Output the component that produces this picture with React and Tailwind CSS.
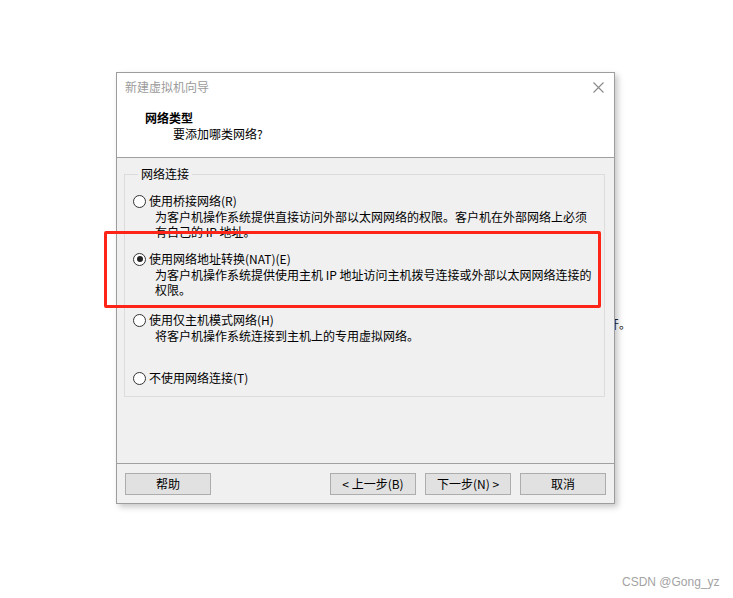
import React from "react";

const cjk = { fontFamily: '"Noto Sans CJK SC", "Microsoft YaHei", sans-serif' };

const Radio = ({ checked }) => (
	<span className="w-[13px] h-[13px] rounded-full border border-[#333] bg-white flex items-center justify-center shrink-0">
		{checked && <span className="w-[6px] h-[6px] rounded-full bg-[#222]"></span>}
	</span>
);

const Option = ({ checked, label, className, children }) => (
	<div className={className}>
		<div className="flex items-center gap-[3px] h-[16px]">
			<Radio checked={checked} />
			<span className="whitespace-nowrap">{label}</span>
		</div>
		{children && (
			<div className="pl-[22px] leading-[15px] whitespace-nowrap">{children}</div>
		)}
	</div>
);

const Btn = ({ children }) => (
	<button className="w-[86px] h-[22px] bg-[#e1e1e1] border border-[#adadad] text-[12px] leading-[20px] text-black flex items-center justify-center">
		{children}
	</button>
);

export default function App() {
	return (
		<div className="relative w-[733px] h-[598px] bg-white overflow-hidden text-[12px] text-black" style={cjk}>
			{/* text of the page behind the dialog */}
			<span className="absolute left-[607px] top-[316px] leading-[16px] text-[#222] z-0">开。</span>

			<div className="relative z-10 ml-[116px] pt-[72px]">
				<div className="w-[499px] h-[432px] border border-[#9d9d9d] bg-[#f0f0f0] flex flex-col shadow-[3px_3px_6px_rgba(0,0,0,0.22)]">
					{/* header */}
					<div className="bg-white h-[85px] border-b border-[#a0a0a0]">
						<div className="h-[28px] flex items-center justify-between pl-[8px] pr-[10px]">
							<span className="text-[#9b9b9b]">新建虚拟机向导</span>
							<svg width="11" height="11" viewBox="0 0 11 11" className="text-[#8a8a8a]">
								<path d="M0.5 0.5L10.5 10.5M10.5 0.5L0.5 10.5" stroke="currentColor" strokeWidth="1.1" />
							</svg>
						</div>
						<div className="mt-[9px] pl-[28px] font-bold leading-[16px]">网络类型</div>
						<div className="pl-[56px] leading-[16px]">要添加哪类网络?</div>
					</div>

					{/* body */}
					<div className="flex-1 flex flex-col">
						<fieldset className="mt-[8px] ml-[7px] w-[481px] h-[231px] border border-[#dcdcdc] pl-[8px]">
							<legend className="ml-[5px] px-[3px] leading-[16px]">网络连接</legend>

							<Option className="mt-[11px]" label="使用桥接网络(R)">
								为客户机操作系统提供直接访问外部以太网网络的权限。客户机在外部网络上必须
								<br />
								有自己的 IP 地址。
							</Option>

							<Option className="mt-[12px]" checked label="使用网络地址转换(NAT)(E)">
								为客户机操作系统提供使用主机 IP 地址访问主机拨号连接或外部以太网网络连接的
								<br />
								权限。
							</Option>

							<Option className="mt-[15px]" label="使用仅主机模式网络(H)">
								将客户机操作系统连接到主机上的专用虚拟网络。
							</Option>

							<Option className="mt-[27px]" label="不使用网络连接(T)" />
						</fieldset>

						<div className="flex-1"></div>
						<div className="border-t border-[#a0a0a0]"></div>
						<div className="flex items-center px-[8px] pt-[9px] pb-[8px]">
							<Btn>帮助</Btn>
							<div className="flex-1"></div>
							<div className="flex gap-[9px]">
								<Btn>&lt; 上一步(B)</Btn>
								<Btn>下一步(N) &gt;</Btn>
								<Btn>取消</Btn>
							</div>
						</div>
					</div>
				</div>
			</div>

			{/* red highlight drawn over the screenshot */}
			<div className="absolute left-[104px] top-[231px] w-[497px] h-[77px] border-[3px] border-[#ff2418] rounded-[2px] z-20"></div>

			<span
				className="absolute left-[622px] top-[574px] text-[12px] leading-[16px] text-[#a3a3a3]"
				style={{ fontFamily: '"Liberation Sans", Arial, sans-serif' }}>
				CSDN @Gong_yz
			</span>
		</div>
	);
}
